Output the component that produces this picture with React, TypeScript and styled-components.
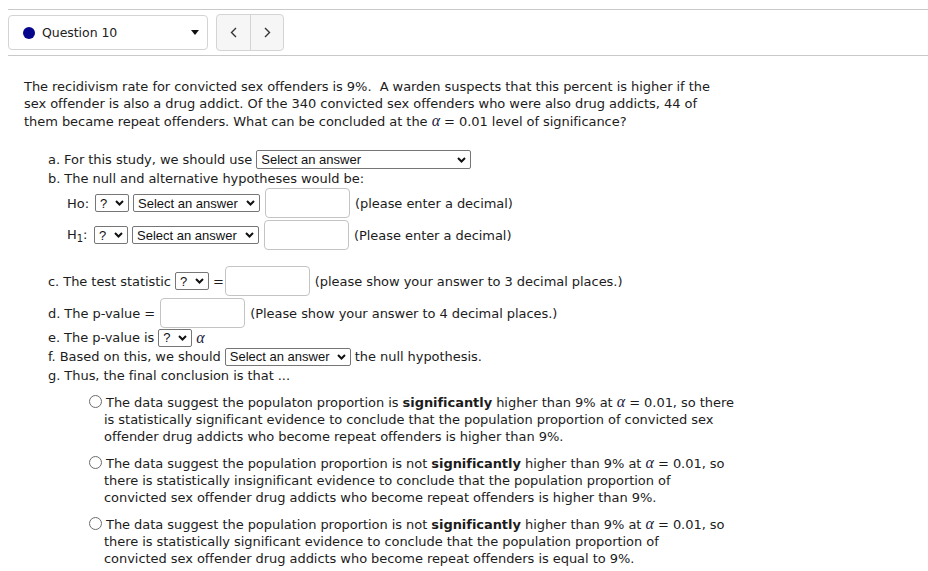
import React from 'react';
import styled, { createGlobalStyle } from 'styled-components';

const GlobalStyle = createGlobalStyle`
  html, body { margin: 0; padding: 0; background: #fff; }
  body {
    padding: 9px 0 0 8px;
    font-family: "DejaVu Sans", "Open Sans", sans-serif;
    font-size: 13px;
    letter-spacing: -0.05px;
    color: #1c1c1c;
    overflow: hidden;
  }
`;

const NavBar = styled.div`
  display: flex;
  align-items: center;
  gap: 8px;
  padding: 4px 0;
  border-top: 1px solid #c9c9c9;
  border-bottom: 1px solid #c9c9c9;
`;

const QuestionPicker = styled.div`
  box-sizing: border-box;
  width: 200px;
  height: 35px;
  display: flex;
  align-items: center;
  padding: 0 8px 0 14px;
  border: 1px solid #d4d4d4;
  border-radius: 4px;
  background: #fff;
`;

const StatusDot = styled.span`
  width: 12px;
  height: 12px;
  border-radius: 50%;
  background: #06068c;
  margin-right: 7px;
`;

const PickerLabel = styled.span`
  flex: 1;
  font-size: 12.5px;
  color: #222;
`;

const NavGroup = styled.div`
  display: flex;
  height: 35px;
  border: 1px solid #d4d4d4;
  border-radius: 4px;
  background: #f6f6f6;
  overflow: hidden;
`;

const NavButton = styled.button<{ $divider?: boolean }>`
  width: 33px;
  padding: 0;
  border: none;
  border-left: ${p => (p.$divider ? '1px solid #d4d4d4' : 'none')};
  background: transparent;
  display: flex;
  align-items: center;
  justify-content: center;
  color: #333;
`;

const Content = styled.div`
  padding: 22px 0 0 16px;
`;

const Prompt = styled.p`
  margin: 0;
  line-height: 17px;
`;

const Parts = styled.div`
  margin-top: 20px;
  padding-left: 24px;
`;

const Row = styled.div<{ $tall?: boolean; $indent?: number; $gap?: number }>`
  display: flex;
  align-items: center;
  gap: 4px;
  height: ${p => (p.$tall ? 30 : 19)}px;
  padding-left: ${p => p.$indent ?? 0}px;
  margin-top: ${p => p.$gap ?? 0}px;
  white-space: nowrap;
`;

const Label = styled.span<{ $w?: number }>`
  display: inline-block;
  width: ${p => (p.$w ? `${p.$w}px` : 'auto')};
`;

const SelectBox = styled.span<{ $w: number; $h?: number }>`
  box-sizing: border-box;
  display: inline-flex;
  align-items: center;
  justify-content: space-between;
  width: ${p => p.$w}px;
  height: ${p => p.$h ?? 18}px;
  padding: 0 4px 0 4px;
  border: 1px solid #767676;
  border-radius: 2px;
  background: #fff;
  font-family: "Liberation Sans", Arial, sans-serif;
  font-size: 13px;
  letter-spacing: 0;
  color: #111;
`;

const TextInput = styled.input<{ $tight?: boolean }>`
  box-sizing: border-box;
  width: 85px;
  height: 30px;
  margin: 0 0 0 ${p => (p.$tight ? -3 : 1)}px;
  border: 1px solid #c4c4c4;
  border-radius: 4px;
  background: #fff;
`;

const Hint = styled.span`
  margin-left: 1px;
`;

const Alpha = styled.span`
  font-family: "Liberation Serif", serif;
  font-style: italic;
  font-size: 16px;
  color: #1a1a40;
`;

const Sub = styled.sub`
  font-size: 10px;
  vertical-align: -3px;
`;

const Options = styled.div`
  margin-top: 8px;
  padding-left: 41px;
`;

const Option = styled.label<{ $first?: boolean }>`
  display: flex;
  align-items: flex-start;
  margin-top: ${p => (p.$first ? 0 : 9)}px;
  line-height: 17px;
`;

const Radio = styled.input`
  appearance: none;
  box-sizing: border-box;
  flex: none;
  width: 13px;
  height: 13px;
  margin: 2px 2px 0 0;
  border: 1px solid #6b6b6b;
  border-radius: 50%;
  background: #fff;
`;

const OptionText = styled.span`
  text-indent: 2px;
`;

const Chevron = () => (
  <svg width="9" height="6" viewBox="0 0 9 6">
    <path d="M1 1l3.5 3.5L8 1" fill="none" stroke="#111" strokeWidth="2" />
  </svg>
);

const Select = ({ w, h, text }: { w: number; h?: number; text: string }) => (
  <SelectBox $w={w} $h={h}>
    <span>{text}</span>
    <Chevron />
  </SelectBox>
);

const A = () => <Alpha>α</Alpha>;

export default function App() {
  return (
    <>
      <GlobalStyle />
      <NavBar>
        <QuestionPicker>
          <StatusDot />
          <PickerLabel>Question 10</PickerLabel>
          <svg width="8" height="5" viewBox="0 0 8 5">
            <path d="M0 0h8L4 5z" fill="#111" />
          </svg>
        </QuestionPicker>
        <NavGroup>
          <NavButton>
            <svg width="7" height="11" viewBox="0 0 7 11">
              <path d="M6 1L1.5 5.5 6 10" fill="none" stroke="#333" strokeWidth="1.4" />
            </svg>
          </NavButton>
          <NavButton $divider>
            <svg width="7" height="11" viewBox="0 0 7 11">
              <path d="M1 1l4.5 4.5L1 10" fill="none" stroke="#333" strokeWidth="1.4" />
            </svg>
          </NavButton>
        </NavGroup>
      </NavBar>

      <Content>
        <Prompt>
          The recidivism rate for convicted sex offenders is 9%.&nbsp; A warden suspects that this percent is higher if the
          <br />
          sex offender is also a drug addict. Of the 340 convicted sex offenders who were also drug addicts, 44 of
          <br />
          them became repeat offenders. What can be concluded at the <A /> = 0.01 level of significance?
        </Prompt>

        <Parts>
          <Row>
            a. For this study, we should use <Select w={215} h={19} text="Select an answer" />
          </Row>
          <Row>b. The null and alternative hypotheses would be:</Row>
          <Row $tall $indent={19}>
            <Label $w={24}>Ho:</Label>
            <Select w={34} text="?" />
            <Select w={127} text="Select an answer" />
            <TextInput />
            <Hint>(please enter a decimal)</Hint>
          </Row>
          <Row $tall $indent={19} $gap={2}>
            <Label $w={23}>
              H<Sub>1</Sub>:
            </Label>
            <Select w={34} text="?" />
            <Select w={127} text="Select an answer" />
            <TextInput />
            <Hint>(Please enter a decimal)</Hint>
          </Row>

          <Row $tall $gap={16}>
            c. The test statistic <Select w={34} text="?" /> = <TextInput $tight />
            <Hint>(please show your answer to 3 decimal places.)</Hint>
          </Row>
          <Row $tall $gap={2}>
            d. The p-value = <TextInput />
            <Hint>(Please show your answer to 4 decimal places.)</Hint>
          </Row>
          <Row>
            e. The p-value is <Select w={34} text="?" /> <A />
          </Row>
          <Row>
            f. Based on this, we should <Select w={126} text="Select an answer" /> the null hypothesis.
          </Row>
          <Row>g. Thus, the final conclusion is that ...</Row>

          <Options>
            <Option $first>
              <Radio type="radio" name="conclusion" />
              <OptionText>
                The data suggest the populaton proportion is <b>significantly</b> higher than 9% at <A /> = 0.01, so there
                <br />
                is statistically significant evidence to conclude that the population proportion of convicted sex
                <br />
                offender drug addicts who become repeat offenders is higher than 9%.
              </OptionText>
            </Option>
            <Option>
              <Radio type="radio" name="conclusion" />
              <OptionText>
                The data suggest the population proportion is not <b>significantly</b> higher than 9% at <A /> = 0.01, so
                <br />
                there is statistically insignificant evidence to conclude that the population proportion of
                <br />
                convicted sex offender drug addicts who become repeat offenders is higher than 9%.
              </OptionText>
            </Option>
            <Option>
              <Radio type="radio" name="conclusion" />
              <OptionText>
                The data suggest the population proportion is not <b>significantly</b> higher than 9% at <A /> = 0.01, so
                <br />
                there is statistically significant evidence to conclude that the population proportion of
                <br />
                convicted sex offender drug addicts who become repeat offenders is equal to 9%.
              </OptionText>
            </Option>
          </Options>

          <Row>h. Interpret the p-value in the context of the study.</Row>
        </Parts>
      </Content>
    </>
  );
}
